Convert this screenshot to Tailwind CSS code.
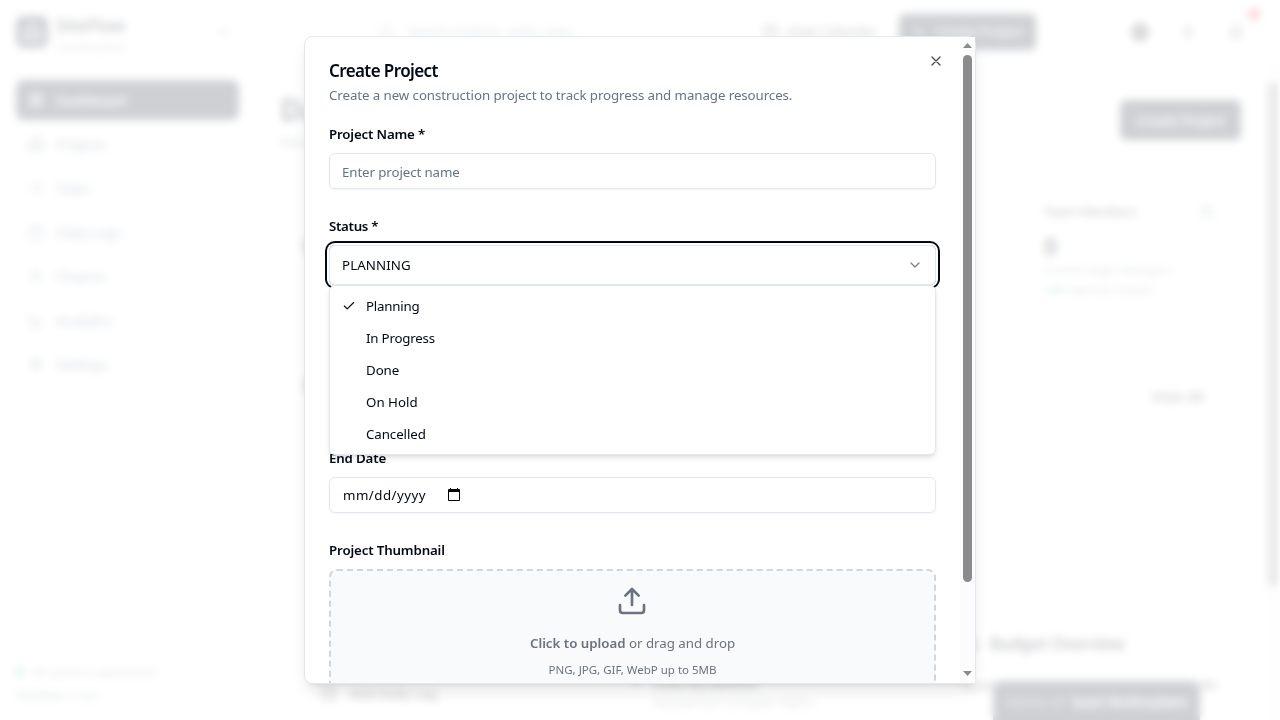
<!DOCTYPE html>
<html lang="en">
<head>
<meta charset="utf-8">
<title>SiteFlow</title>
<script src="https://cdn.jsdelivr.net/npm/@tailwindcss/browser@4"></script>
</head>
<body class="relative h-[720px] w-[1280px] overflow-hidden bg-white font-['Noto_Sans','Open_Sans',sans-serif] text-[13.3px] tracking-[-0.08px] text-[#020817]">

<!-- App behind the dialog -->
<div class="flex h-[720px] w-[1280px] overflow-hidden">
  <aside class="flex w-64 shrink-0 flex-col border-r border-slate-200">
    <div class="flex h-16 items-center gap-2 border-b border-slate-100 px-4">
      <div class="flex size-8 items-center justify-center rounded-lg bg-[#0f172a]">
        <svg class="size-5" viewBox="0 0 24 24" fill="none" stroke="white" stroke-width="2"><path d="M6 22V4a2 2 0 0 1 2-2h8a2 2 0 0 1 2 2v18ZM6 12H4a2 2 0 0 0-2 2v8h20V11a2 2 0 0 0-2-2h-2M10 6h4M10 10h4M10 14h4M10 18h4"/></svg>
      </div>
      <div class="flex-1 pt-1.5">
        <div class="text-[17.5px] leading-5 font-semibold tracking-[-0.3px]">SiteFlow</div>
        <div class="mt-1 text-[11.5px] leading-4 text-[#64748b]">Construction</div>
      </div>
      <svg class="mr-2 size-4" viewBox="0 0 24 24" fill="none" stroke="currentColor" stroke-width="2"><path d="m15 18-6-6 6-6"/></svg>
    </div>
    <nav class="flex flex-1 flex-col gap-1 p-4 text-[14px] font-medium tracking-[-0.4px] text-[#64748b]">
      <div class="flex h-10 items-center gap-3 rounded-lg bg-[#0f172a] px-3 text-white"><svg class="size-4" viewBox="0 0 24 24" fill="none" stroke="currentColor" stroke-width="2"><path d="M3 3h7v9H3zM14 3h7v5h-7zM14 12h7v9h-7zM3 16h7v5H3z"/></svg>Dashboard</div>
      <div class="flex h-10 items-center gap-3 px-3"><svg class="size-4" viewBox="0 0 24 24" fill="none" stroke="currentColor" stroke-width="2"><path d="M6 22V3h12v19ZM6 12H2v10h20V9h-4M10 7h4M10 11h4M10 15h4"/></svg>Projects</div>
      <div class="flex h-10 items-center gap-3 px-3"><svg class="size-4" viewBox="0 0 24 24" fill="none" stroke="currentColor" stroke-width="2"><path d="m3 17 2 2 4-4M3 7l2 2 4-4M13 6h8M13 12h8M13 18h8"/></svg>Tasks</div>
      <div class="flex h-10 items-center gap-3 px-3"><svg class="size-4" viewBox="0 0 24 24" fill="none" stroke="currentColor" stroke-width="2"><path d="M8 2v4M16 2v4M3 4h18v18H3zM3 10h18"/></svg>Daily Logs</div>
      <div class="flex h-10 items-center gap-3 px-3"><svg class="size-4" viewBox="0 0 24 24" fill="none" stroke="currentColor" stroke-width="2"><path d="M12 2v20M17 5H9.500a3.500 3.500 0 0 0 0 7h5a3.500 3.500 0 0 1 0 7H6"/></svg>Finance</div>
      <div class="flex h-10 items-center gap-3 px-3"><svg class="size-4" viewBox="0 0 24 24" fill="none" stroke="currentColor" stroke-width="2"><path d="M3 3v18h18M18 17V9M13 17V5M8 17v-3"/></svg>Analytics</div>
      <div class="flex h-10 items-center gap-3 px-3"><svg class="size-4" viewBox="0 0 24 24" fill="none" stroke="currentColor" stroke-width="2"><circle cx="12" cy="12" r="3"/><circle cx="12" cy="12" r="8"/><path d="M12 2v3M12 19v3M2 12h3M19 12h3"/></svg>Settings</div>
    </nav>
    <div class="flex h-[73px] flex-col justify-center gap-2 border-t border-slate-100 px-4 text-[11.5px] leading-4 text-[#64748b]">
      <div class="flex items-center gap-2"><span class="size-2 rounded-full bg-green-500"></span>All systems operational</div>
      <div class="text-[12px]">SiteFlow v1.0.0</div>
    </div>
  </aside>

  <div class="flex min-w-0 flex-1 flex-col">
    <header class="flex h-16 shrink-0 items-center border-b border-slate-100 pr-6 font-medium">
      <div class="ml-[109px] flex h-9 w-[368px] items-center gap-3.5 rounded-md border border-slate-200 px-3 font-normal tracking-[-0.2px] text-[#64748b]"><svg class="size-4" viewBox="0 0 24 24" fill="none" stroke="currentColor" stroke-width="2"><circle cx="11" cy="11" r="8"/><path d="m21 21-4-4"/></svg>Search projects, tasks, logs...</div>
      <div class="ml-[30px] flex w-[136px] items-center gap-2"><svg class="size-4" viewBox="0 0 24 24" fill="none" stroke="currentColor" stroke-width="2"><path d="M8 2v4M16 2v4M3 4h18v18H3zM3 10h18"/></svg>View Calendar</div>
      <div class="flex h-9 w-[137px] items-center justify-center gap-2 rounded-md bg-[#0f172a] text-white"><svg class="size-4" viewBox="0 0 24 24" fill="none" stroke="currentColor" stroke-width="2"><path d="M5 12h14M12 5v14"/></svg>Create Project</div>
      <div class="ml-auto flex items-center">
        <svg class="mr-[30px] size-5 text-[#1f1f1f]" viewBox="0 0 24 24" fill="none" stroke="currentColor" stroke-width="2"><circle cx="12" cy="12" r="10" fill="#777777"/><path d="M2 12h20M12 2a15 15 0 0 1 0 20 15 15 0 0 1 0-20"/></svg>
        <svg class="mr-8 size-4" viewBox="0 0 24 24" fill="none" stroke="currentColor" stroke-width="2"><circle cx="12" cy="12" r="4"/><path d="M12 2v2M12 20v2M2 12h2M20 12h2M5 5l1 1M18 18l1 1M5 19l1-1M18 6l1-1"/></svg>
        <span class="relative mr-3"><svg class="size-4" viewBox="0 0 24 24" fill="none" stroke="currentColor" stroke-width="2"><path d="M6 8a6 6 0 0 1 12 0c0 7 3 9 3 9H3s3-2 3-9M10 21h4"/></svg><i class="absolute -top-4 left-5 size-3 rounded-full bg-red-500"></i></span>
      </div>
    </header>
    <div class="flex min-h-0 flex-1">
      <main class="flex flex-1 flex-col overflow-hidden px-6 pt-6">
        <div class="flex h-16 shrink-0 items-center justify-between">
          <div><h1 class="pt-1 text-[30px] leading-9 font-bold">Dashboard</h1><p class="mt-1 leading-5 text-[#64748b]">Welcome</p></div>
          <div class="flex h-10 w-[121px] items-center justify-center rounded-md bg-[#0f172a] text-[14px] font-medium tracking-[-0.4px] text-white">Create Project</div>
        </div>
        <div class="mt-[26px] grid h-[142px] shrink-0 grid-cols-4 gap-6">
          <div class="rounded-xl border border-slate-200 px-[22px] pt-6"><div class="mt-[27px] text-2xl leading-8 font-bold">0</div></div>
          <div class="rounded-xl border border-slate-200 p-6"></div>
          <div class="rounded-xl border border-slate-200 p-6"></div>
          <div class="rounded-xl border border-slate-200 px-6 pt-6">
            <div class="flex items-center justify-between leading-4 font-medium tracking-[-0.4px]">Team Members<svg class="size-4 text-[#64748b]" viewBox="0 0 24 24" fill="none" stroke="currentColor" stroke-width="2"><circle cx="9" cy="7" r="4"/><path d="M2 21v-2a4 4 0 0 1 4-4h6a4 4 0 0 1 4 4v2M22 21v-2a4 4 0 0 0-3-4"/></svg></div>
            <div class="mt-[11px] text-2xl leading-8 font-bold">0</div>
            <div class="text-[11.5px] leading-4 whitespace-nowrap text-[#64748b]">Current page managers</div>
            <div class="mt-1 text-[11.5px] leading-4 text-[#64748b]"><span class="text-green-600">+0%</span> new this month</div>
          </div>
        </div>
        <div class="mt-6 flex h-[234px] shrink-0 justify-between rounded-xl border border-slate-200 px-[22px] pt-6"><div class="text-2xl font-semibold">P</div><div class="mt-[17px] mr-3.5 text-[14px] font-medium tracking-[0.1px]">View All</div></div>
        <div class="mt-6 grid h-[200px] shrink-0 grid-cols-3 gap-6">
          <div class="rounded-xl border border-slate-200 px-10 pt-20"><div class="flex items-center gap-3 text-[14px] font-medium tracking-[-0.3px]"><svg class="size-4" viewBox="0 0 24 24" fill="none" stroke="currentColor" stroke-width="2"><path d="M8 2v4M16 2v4M3 4h18v18H3zM3 10h18"/></svg>Add Daily Log</div></div>
          <div class="flex gap-3 rounded-xl border border-slate-200 px-6 pt-[70px]"><span class="mt-1 size-2 rounded-full bg-blue-500"></span><div><div class="leading-5 font-medium tracking-[-0.5px]">Daily log updated</div><div class="text-[13px] whitespace-nowrap text-[#64748b]">Residential Complex Alpha</div></div></div>
          <div class="rounded-xl border border-slate-200 px-6 pt-[25px]"><div class="flex items-center gap-2 text-[17px] leading-8 font-semibold tracking-[-0.5px]"><svg class="size-5" viewBox="0 0 24 24" fill="none" stroke="currentColor" stroke-width="2"><path d="M12 2v20M17 5H9a3.500 3.500 0 0 0 0 7h6a3.500 3.500 0 0 1 0 7H6"/></svg>Budget Overview</div><div class="mt-4 flex justify-between font-medium"><span>Total</span><span>$0</span></div></div>
        </div>
      </main>
      <div class="w-[15px] bg-neutral-50 px-[3px] pt-[18px]"><div class="h-[505px] rounded-full bg-[#8b8b8b]"></div></div>
    </div>
  </div>
</div>
<div class="absolute top-[681px] left-[993px] flex h-[46px] w-[207px] items-start justify-end gap-1.5 rounded-lg bg-[#0f172a] pt-[9px] pr-3 text-[15px] text-white"><span class="opacity-60">Demo of</span><b class="font-semibold">SaaS Boilerplate</b></div>

<div class="absolute inset-0 bg-white/80 backdrop-blur-[4px]"></div>

<!-- Dialog -->
<div class="absolute top-9 left-[304px] flex h-[648px] w-[672px] rounded-lg border border-slate-200 bg-white shadow-lg">
  <div class="flex-1 overflow-hidden rounded-bl-lg pt-6 pr-6 pl-6">
    <h2 class="text-[17px] leading-5 font-semibold tracking-[-0.6px]">Create Project</h2>
    <p class="mt-1 leading-5 whitespace-nowrap text-[#64748b]">Create a new construction project to track progress and manage resources.</p>
    <form class="mt-4 flex flex-col gap-6">
      <div class="flex flex-col gap-2">
        <label class="h-6 leading-[26px] font-semibold tracking-[-0.18px]">Project Name *</label>
        <div class="flex h-9 items-center rounded-md border border-slate-200 px-3 pt-[3px] tracking-[-0.1px] text-[#64748b] shadow-xs">Enter project name</div>
      </div>
      <div class="flex flex-col gap-2">
        <label class="h-6 leading-[26px] font-semibold tracking-[-0.3px]">Status *</label>
        <div class="relative flex h-10 items-center justify-between rounded-md border border-slate-200 px-3 ring-2 ring-[#020817] ring-offset-2"><span class="pt-0.5 tracking-[0.1px]">PLANNING</span>
          <svg class="size-4 opacity-50" viewBox="0 0 24 24" fill="none" stroke="currentColor" stroke-width="2" stroke-linecap="round" stroke-linejoin="round"><path d="m6 9 6 6 6-6"/></svg>
          <div class="absolute top-[39px] -left-px z-10 w-[607px] rounded-md border border-slate-200 bg-white p-1 tracking-[-0.2px] shadow-md">
            <div class="flex h-8 items-center"><span class="flex w-8 pl-2"><svg class="size-3.5" viewBox="0 0 24 24" fill="none" stroke="currentColor" stroke-width="2" stroke-linecap="round" stroke-linejoin="round"><path d="M20 6 9 17l-5-5"/></svg></span><span class="pt-0.5">Planning</span></div>
            <div class="flex h-8 items-center pt-0.5 pl-8">In Progress</div>
            <div class="flex h-8 items-center pt-0.5 pl-8 tracking-[-0.08px]">Done</div>
            <div class="flex h-8 items-center pt-0.5 pl-8 tracking-[0px]">On Hold</div>
            <div class="flex h-8 items-center pt-0.5 pl-8 tracking-[-0.08px]">Cancelled</div>
          </div>
        </div>
      </div>
      <div class="h-28"></div>
      <div class="flex flex-col gap-2">
        <label class="h-6 leading-[26px] font-semibold tracking-[-0.17px]">End Date</label>
        <div class="flex h-9 items-center gap-[21px] rounded-md border border-slate-200 pr-3 pl-[13px] shadow-xs"><span class="w-[84px] pt-0.5 tracking-[0.48px]">mm/dd/yyyy</span>
          <svg class="-mt-px h-[13px] w-3" viewBox="0 0 12 13"><path fill="#000" fill-rule="evenodd" d="M2 0h1v1h6V0h1v1h1a1 1 0 0 1 1 1v10a1 1 0 0 1-1 1H1a1 1 0 0 1-1-1V2a1 1 0 0 1 1-1h1ZM1 4v8h10V4Z"/></svg>
        </div>
      </div>
      <div class="flex flex-col gap-2">
        <label class="h-6 leading-[26px] font-semibold tracking-[-0.15px]">Project Thumbnail</label>
        <div class="flex h-32 flex-col items-center rounded-lg border-2 border-dashed border-gray-300 bg-[#f9fafb] pt-3.5 text-[#6b7280]">
          <svg class="mr-px size-8" viewBox="0 0 24 24" fill="none" stroke="currentColor" stroke-width="2" stroke-linecap="round" stroke-linejoin="round"><path d="M21 15v4a2 2 0 0 1-2 2H5a2 2 0 0 1-2-2v-4M17 8l-5-5-5 5M12 3v12"/></svg>
          <p class="mt-4 leading-5 tracking-[-0.02px]"><b class="font-semibold">Click to upload</b> or drag and drop</p>
          <p class="mt-[9px] text-[11.5px] leading-4 tracking-[0px]">PNG, JPG, GIF, WebP up to 5MB</p>
        </div>
      </div>
    </form>
  </div>
  <div class="flex w-[15px] flex-col items-center bg-[#fcfcfc] pt-[6px]">
    <svg class="h-[5px] w-[9px]" viewBox="0 0 9 5"><path fill="#8b8b8b" d="M4.500 0 9 5H0z"/></svg>
    <div class="mt-[7px] h-[527px] w-[9px] rounded-full bg-[#8b8b8b]"></div>
    <svg class="mt-[89px] h-[5px] w-[9px]" viewBox="0 0 9 5"><path fill="#8b8b8b" d="M0 0h9L4.500 5z"/></svg>
  </div>
  <svg class="absolute top-4 right-[31px] size-4 opacity-70" viewBox="0 0 24 24" fill="none" stroke="currentColor" stroke-width="2" stroke-linecap="round" stroke-linejoin="round"><path d="M18 6 6 18M6 6l12 12"/></svg>
</div>
</body>
</html>
